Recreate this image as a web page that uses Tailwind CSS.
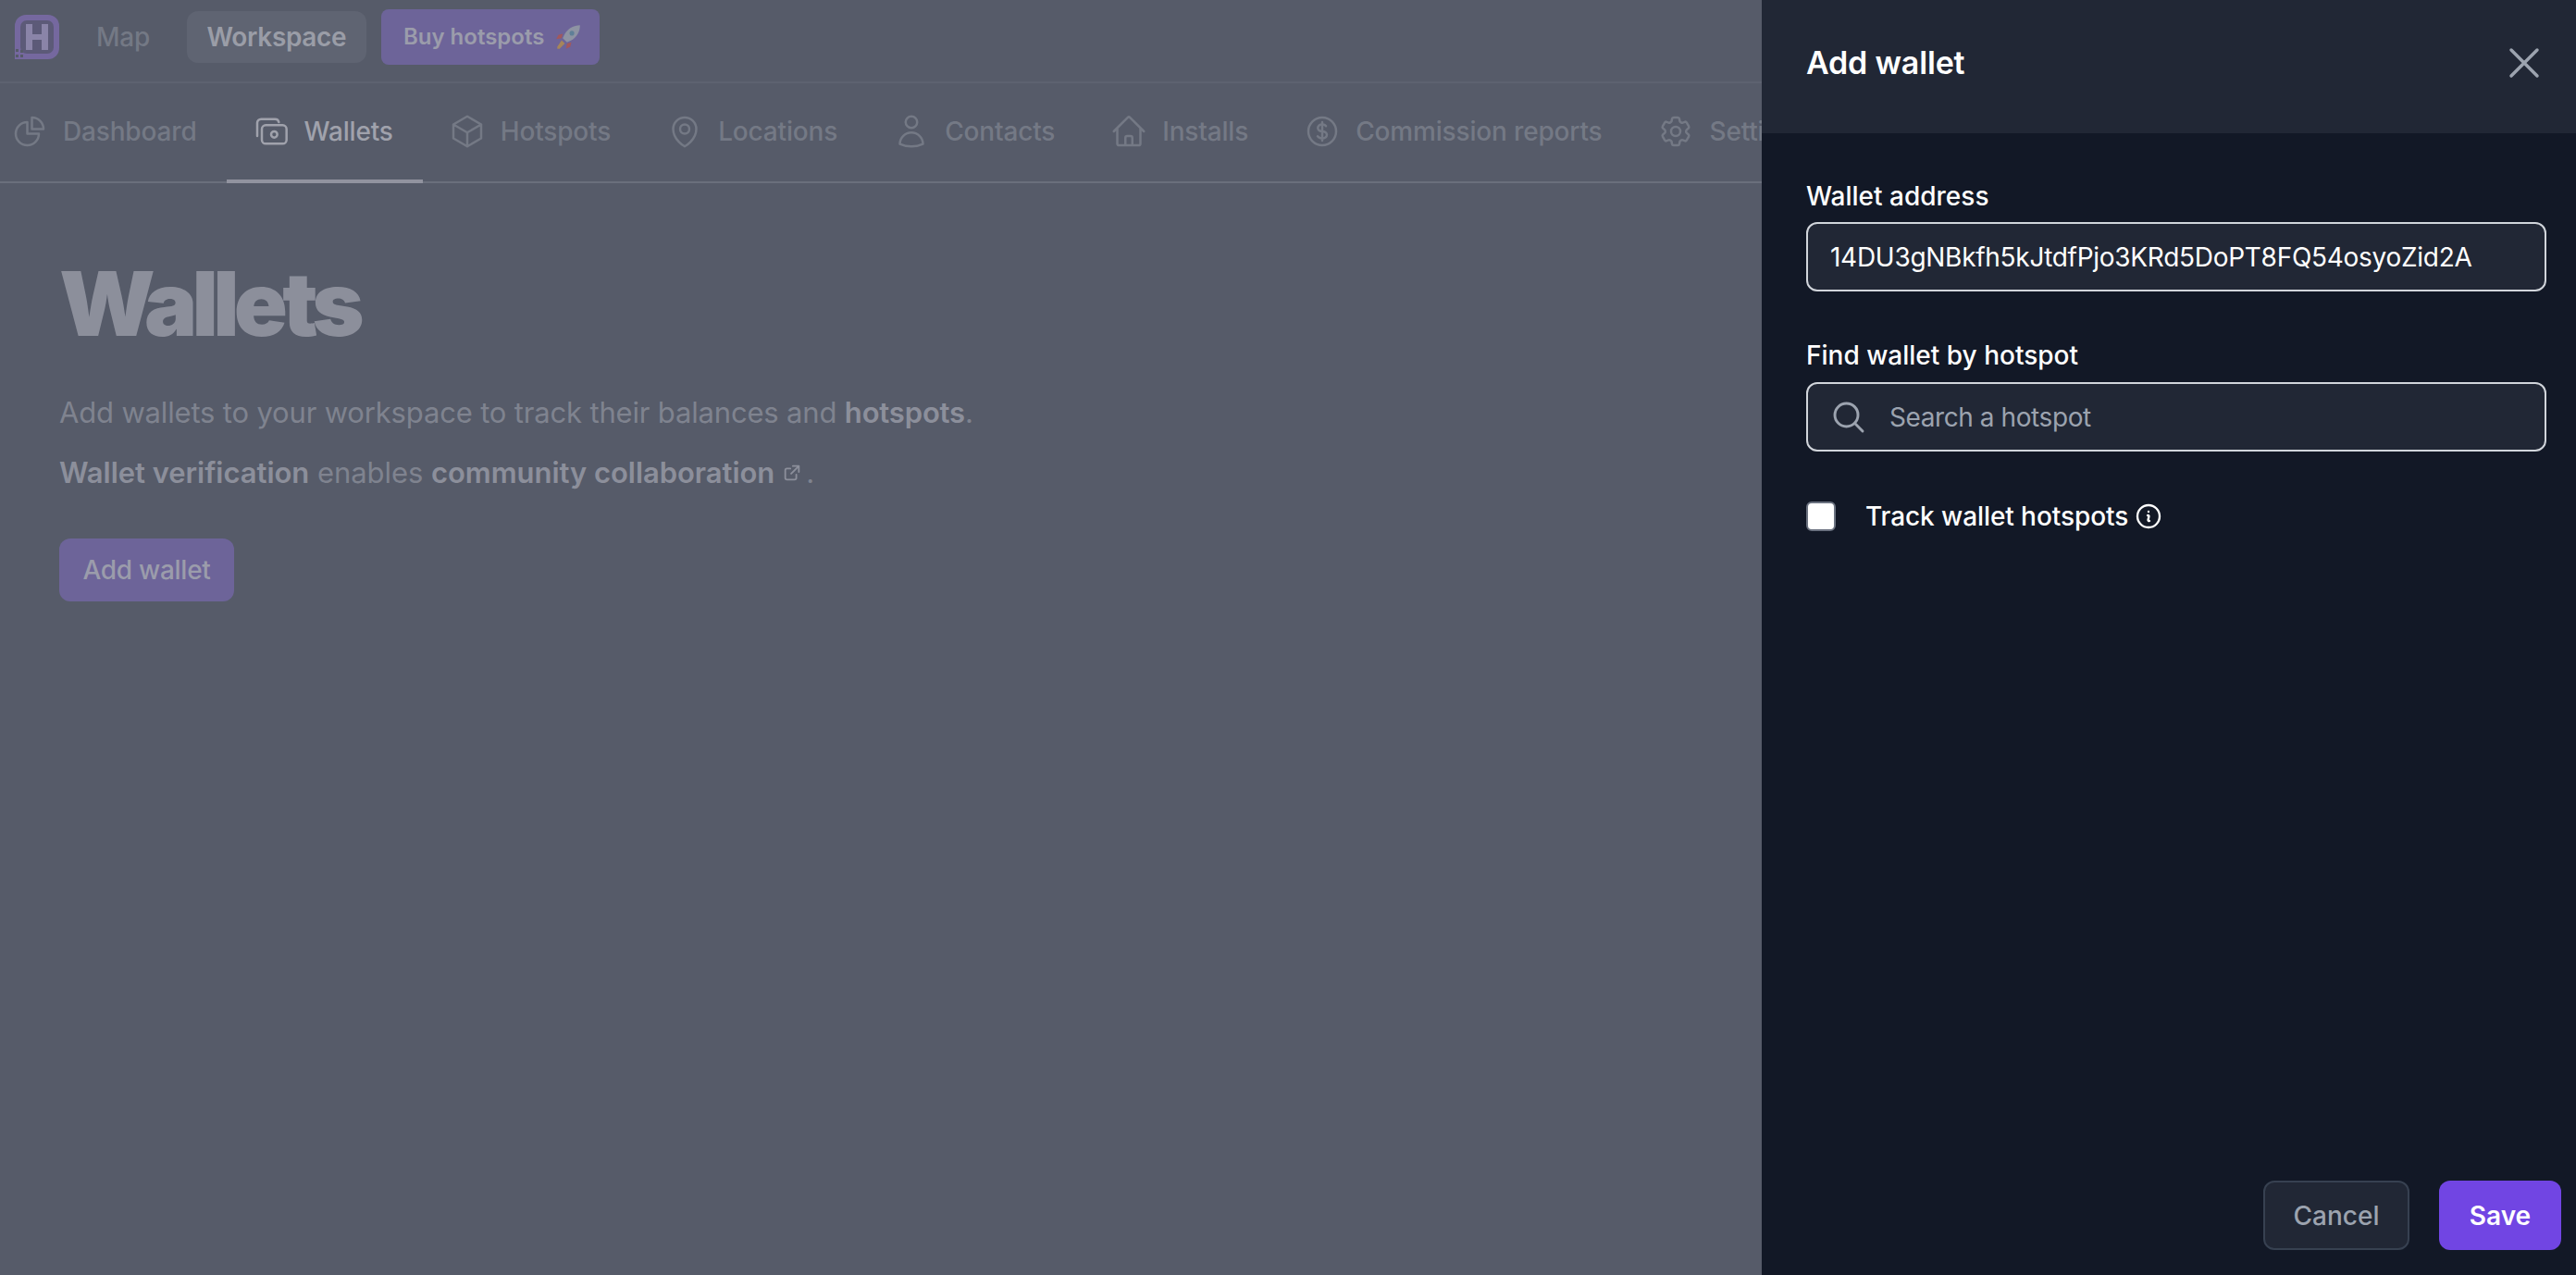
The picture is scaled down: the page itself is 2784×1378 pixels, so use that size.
<!DOCTYPE html>
<html lang="en">
<head>
    <meta charset="UTF-8">
    <meta name="viewport" content="width=device-width, initial-scale=1.0">
    <title>Wallets</title>
    <script src="https://cdn.jsdelivr.net/npm/@tailwindcss/browser@4"></script>
</head>
<body class="h-[1378px] w-[2784px] overflow-hidden bg-[#565b69] font-['Inter',sans-serif] text-[28px] leading-[40px]">

    <div class="flex h-[1378px]">
        <!-- Page behind the overlay -->
        <main class="w-[1904px] shrink-0 overflow-hidden">
            <!-- Top bar -->
            <header class="flex h-[90px] items-center border-b-2 border-[#5d6270] pb-2 pl-4">
                <svg class="h-12 w-12 shrink-0" viewBox="0 0 48 48">
                    <path d="M0 12A12 12 0 0112 0h24a12 12 0 0112 12v24a12 12 0 01-12 12H0z" fill="#75689f"/>
                    <rect x="6" y="6" width="36" height="36" rx="7" fill="#5c5a78"/>
                    <path d="M12 10h7v11h10V10h7v28h-7V27H19v11h-7z" fill="#8a84a8"/>
                    <path d="M1 37h3v3H1zM1 43h3v3H1zM6 43h3v3H6zM6 38h3v3H6z" fill="#565b69"/>
                </svg>
                <a class="ml-[40px] font-medium tracking-[-0.01em] text-[#747985]">Map</a>
                <a class="ml-[40px] flex h-[56px] w-[194px] items-center justify-center rounded-xl bg-[#5f6472] font-semibold tracking-[-0.012em] text-[#9a9da7]">Workspace</a>
                <a class="ml-4 flex h-[60px] w-[236px] items-center justify-between rounded-lg bg-[#6d6499] pl-6 pr-5 text-[24px] font-semibold text-[#9b9cab]">
                    Buy hotspots
                    <svg class="h-7 w-7 shrink-0" viewBox="0 0 24 24">
                        <path d="M23 1c-6 0-11 3-14 8l-2 4 4 4 4-2c5-3 8-8 8-14z" fill="#8e93a3"/>
                        <circle cx="15.5" cy="8.5" r="2.2" fill="#5f7f97"/>
                        <path d="M7 9l-4 1-2 4 5-1zM15 17l-1 4-4 2 1-5z" fill="#a2585c"/>
                        <path d="M6 15l3 3-5 5-2 0 0-2z" fill="#a6855a"/>
                    </svg>
                </a>
            </header>

            <!-- Tabs -->
            <nav class="-ml-4 flex h-[108px] border-b-2 border-[#6a6f7c] font-medium tracking-[-0.006em] whitespace-nowrap text-[#747985]">
                <a class="flex h-[108px] shrink-0 items-center px-8 pb-1">
                    <svg class="-ml-1 mr-4 h-10 w-10 shrink-0" fill="none" viewBox="0 0 24 24" stroke="currentColor" stroke-width="1.5"><path stroke-linecap="round" stroke-linejoin="round" d="M10.5 6a7.5 7.5 0 107.5 7.5h-7.5V6z"/><path stroke-linecap="round" stroke-linejoin="round" d="M13.5 10.5H21A7.5 7.5 0 0013.5 3v7.5z"/></svg>
                    Dashboard
                </a>
                <a class="flex h-[108px] shrink-0 items-center border-b-4 border-[#91939f] px-8 text-[#a0a2ac]">
                    <svg class="-ml-1 mr-4 h-10 w-10 shrink-0" fill="none" viewBox="0 0 24 24" stroke="currentColor" stroke-width="1.5"><path stroke-linecap="round" stroke-linejoin="round" d="M3 15V6.5A2.5 2.5 0 015.5 4h9A2.5 2.5 0 0117 6"/><rect x="6" y="8" width="16" height="12" rx="2.5"/><circle cx="14" cy="14" r="2"/></svg>
                    Wallets
                </a>
                <a class="flex h-[108px] shrink-0 items-center px-8 pb-1">
                    <svg class="-ml-1 mr-4 h-10 w-10 shrink-0" fill="none" viewBox="0 0 24 24" stroke="currentColor" stroke-width="1.5"><path stroke-linecap="round" stroke-linejoin="round" d="M21 7.5l-9-5.25L3 7.5m18 0l-9 5.25m9-5.25v9l-9 5.25M3 7.5l9 5.25M3 7.5v9l9 5.25m0-9v9"/></svg>
                    Hotspots
                </a>
                <a class="flex h-[108px] shrink-0 items-center px-8 pb-1">
                    <svg class="-ml-1 mr-4 h-10 w-10 shrink-0" fill="none" viewBox="0 0 24 24" stroke="currentColor" stroke-width="1.5"><path stroke-linecap="round" stroke-linejoin="round" d="M15 10.5a3 3 0 11-6 0 3 3 0 016 0z"/><path stroke-linecap="round" stroke-linejoin="round" d="M19.5 10.5c0 7.142-7.5 11.25-7.5 11.25S4.5 17.642 4.5 10.5a7.5 7.5 0 1115 0z"/></svg>
                    Locations
                </a>
                <a class="flex h-[108px] shrink-0 items-center px-8 pb-1">
                    <svg class="-ml-1 mr-4 h-10 w-10 shrink-0" fill="none" viewBox="0 0 24 24" stroke="currentColor" stroke-width="1.5"><path stroke-linecap="round" stroke-linejoin="round" d="M15.75 6a3.75 3.75 0 11-7.5 0 3.75 3.75 0 017.5 0zM4.501 20.118a7.5 7.5 0 0114.998 0A17.933 17.933 0 0112 21.75c-2.676 0-5.216-.584-7.499-1.632z"/></svg>
                    Contacts
                </a>
                <a class="flex h-[108px] shrink-0 items-center px-8 pb-1">
                    <svg class="-ml-1 mr-4 h-10 w-10 shrink-0" fill="none" viewBox="0 0 24 24" stroke="currentColor" stroke-width="1.5"><path stroke-linecap="round" stroke-linejoin="round" d="M2.25 12l8.954-8.955c.44-.439 1.152-.439 1.591 0L21.75 12M4.5 9.75v10.125c0 .621.504 1.125 1.125 1.125H9.75v-4.875c0-.621.504-1.125 1.125-1.125h2.25c.621 0 1.125.504 1.125 1.125V21h4.125c.621 0 1.125-.504 1.125-1.125V9.75M8.25 21h8.25"/></svg>
                    Installs
                </a>
                <a class="flex h-[108px] shrink-0 items-center px-8 pb-1">
                    <svg class="-ml-1 mr-4 h-10 w-10 shrink-0" fill="none" viewBox="0 0 24 24" stroke="currentColor" stroke-width="1.5"><path stroke-linecap="round" stroke-linejoin="round" d="M12 6v12m-3-2.818l.879.659c1.171.879 3.07.879 4.242 0 1.172-.879 1.172-2.303 0-3.182C13.536 12.219 12.768 12 12 12c-.725 0-1.45-.22-2.003-.659-1.106-.879-1.106-2.303 0-3.182s2.9-.879 4.006 0l.415.33M21 12a9 9 0 11-18 0 9 9 0 0118 0z"/></svg>
                    Commission reports
                </a>
                <a class="flex h-[108px] shrink-0 items-center px-8 pb-1">
                    <svg class="-ml-1 mr-4 h-10 w-10 shrink-0" fill="none" viewBox="0 0 24 24" stroke="currentColor" stroke-width="1.5"><path stroke-linecap="round" stroke-linejoin="round" d="M9.594 3.94c.09-.542.56-.94 1.11-.94h2.593c.55 0 1.02.398 1.11.94l.213 1.281c.063.374.313.686.645.87.074.04.147.083.22.127.324.196.72.257 1.075.124l1.217-.456a1.125 1.125 0 011.37.49l1.296 2.247a1.125 1.125 0 01-.26 1.431l-1.003.827c-.293.24-.438.613-.431.992a6.759 6.759 0 010 .255c-.007.378.138.75.43.99l1.005.828c.424.35.534.954.26 1.43l-1.298 2.247a1.125 1.125 0 01-1.369.491l-1.217-.456c-.355-.133-.75-.072-1.076.124a6.57 6.57 0 01-.22.128c-.331.183-.581.495-.644.869l-.213 1.28c-.09.543-.56.941-1.11.941h-2.594c-.55 0-1.02-.398-1.11-.94l-.213-1.281c-.062-.374-.312-.686-.644-.87a6.52 6.52 0 01-.22-.127c-.325-.196-.72-.257-1.076-.124l-1.217.456a1.125 1.125 0 01-1.369-.49l-1.297-2.247a1.125 1.125 0 01.26-1.431l1.004-.827c.292-.24.437-.613.43-.992a6.932 6.932 0 010-.255c.007-.378-.138-.75-.43-.99l-1.004-.828a1.125 1.125 0 01-.26-1.43l1.297-2.247a1.125 1.125 0 011.37-.491l1.216.456c.356.133.751.072 1.076-.124.072-.044.146-.087.22-.128.332-.183.582-.495.644-.869l.214-1.281z"/><path stroke-linecap="round" stroke-linejoin="round" d="M15 12a3 3 0 11-6 0 3 3 0 016 0z"/></svg>
                    Settings
                </a>
            </nav>

            <!-- Content -->
            <section class="px-16 pt-[82px]">
                <h1 class="text-[96px] leading-[96px] font-black tracking-[-0.06em] text-[#8c8f9b]">Wallets</h1>
                <p class="mt-[46px] text-[31px] leading-[48px] tracking-[-0.0055em] text-[#7f838f]">Add wallets to your workspace to track their balances and <strong class="font-semibold text-[#8c8f9b]">hotspots</strong>.</p>
                <p class="mt-[17px] flex items-center text-[31px] leading-[48px] tracking-[-0.0015em] whitespace-nowrap text-[#7f838f]">
                    <strong class="font-semibold text-[#8c8f9b]">Wallet verification</strong>&nbsp;enables&nbsp;<strong class="font-semibold text-[#8c8f9b]">community collaboration</strong>
                    <svg class="ml-2 h-[22px] w-[22px] shrink-0 text-[#8c8f9b]" fill="none" viewBox="0 0 24 24" stroke="currentColor" stroke-width="2"><path stroke-linecap="round" stroke-linejoin="round" d="M13 4h7v7M20 4l-9 9M17 14v4a2 2 0 01-2 2H6a2 2 0 01-2-2V9a2 2 0 012-2h4"/></svg>
                    <span class="ml-1">.</span>
                </p>
                <a class="mt-[47px] flex h-[68px] w-[189px] items-center justify-center rounded-xl bg-[#6d6499] font-medium tracking-[-0.01em] text-[#9b9cab]">Add wallet</a>
            </section>
        </main>

        <!-- Slide-over panel -->
        <aside class="flex w-[880px] shrink-0 flex-col bg-[#121826]">
            <div class="flex h-[144px] items-center justify-between bg-[#212735] pb-2 pl-12 pr-[28px]">
                <h2 class="text-[34px] leading-[48px] font-semibold tracking-[-0.005em] text-white">Add wallet</h2>
                <svg class="h-14 w-14 text-[#9ca3af]" fill="none" viewBox="0 0 24 24" stroke="currentColor" stroke-width="1.5"><path stroke-linecap="round" stroke-linejoin="round" d="M6 18L18 6M6 6l12 12"/></svg>
            </div>

            <div class="flex-1 pl-12 pr-8 pt-[48px]">
                <label class="block font-medium text-white">Wallet address</label>
                <div class="mt-2 flex h-[75px] items-center rounded-xl border-2 border-[#d1d5db] bg-[#212735] pl-[24px] tracking-[-0.01em] text-white">14DU3gNBkfh5kJtdfPjo3KRd5DoPT8FQ54osyoZid2A</div>

                <label class="mt-[49px] block font-medium text-white">Find wallet by hotspot</label>
                <div class="mt-[9px] flex h-[75px] items-center rounded-xl border-2 border-[#d1d5db] bg-[#212735] pl-[24px] tracking-[-0.015em] text-[#9ca3af]">
                    <svg class="mr-[24px] h-10 w-10 shrink-0 text-[#9ca3af]" fill="none" viewBox="0 0 24 24" stroke="currentColor" stroke-width="1.75"><path stroke-linecap="round" stroke-linejoin="round" d="M21 21l-5.197-5.197m0 0A7.5 7.5 0 105.196 5.196a7.5 7.5 0 0010.607 10.607z"/></svg>
                    Search a hotspot
                </div>

                <div class="mt-[50px] flex items-center">
                    <span class="h-8 w-8 rounded-md border-2 border-[#6b7280] bg-white"></span>
                    <label class="ml-8 font-medium tracking-[-0.003em] text-white">Track wallet hotspots</label>
                    <svg class="ml-[6px] h-8 w-8 text-white" fill="none" viewBox="0 0 24 24" stroke="currentColor" stroke-width="1.75"><path stroke-linecap="round" stroke-linejoin="round" d="M11.25 11.25l.041-.02a.75.75 0 011.063.852l-.708 2.836a.75.75 0 001.063.853l.041-.021M21 12a9 9 0 11-18 0 9 9 0 0118 0zm-9-3.75h.008v.008H12V8.25z"/></svg>
                </div>
            </div>

            <div class="flex justify-end gap-8 pb-[27px] pr-4">
                <button class="h-[75px] w-[158px] rounded-xl border-2 border-[#374151] bg-[#212735] font-medium text-[#9ca3af]">Cancel</button>
                <button class="h-[75px] w-[132px] rounded-xl bg-[#7145e3] font-semibold text-white">Save</button>
            </div>
        </aside>
    </div>

</body>
</html>
